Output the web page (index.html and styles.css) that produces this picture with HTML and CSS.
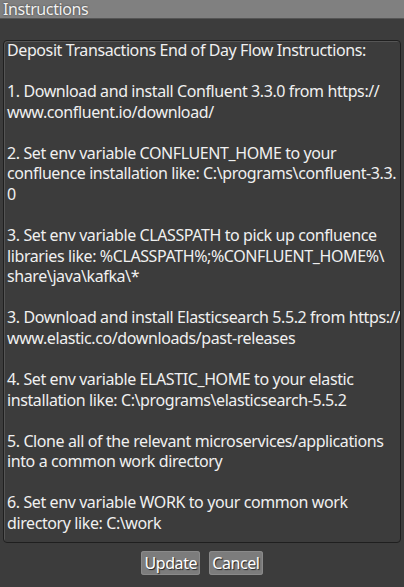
FILE: index.html
```html
<!DOCTYPE html>
<html>
<head>
<meta charset="utf-8">
<link rel="stylesheet" href="styles.css">
</head>
<body>
<div class="titlebar">Instructions</div>
<div class="panel">
<div class="textbox"><div class="text">Deposit Transactions End of Day Flow Instructions:

1. Download and install Confluent 3.3.0 from https://
www.confluent.io/download/

2. Set env variable CONFLUENT_HOME to your
confluence installation like: C:\programs\confluent-3.3.
0

3. Set env variable CLASSPATH to pick up confluence
libraries like: %CLASSPATH%;%CONFLUENT_HOME%\
share\java\kafka\*

3. Download and install Elasticsearch 5.5.2 from https://
www.elastic.co/downloads/past-releases

4. Set env variable ELASTIC_HOME to your elastic
installation like: C:\programs\elasticsearch-5.5.2

5. Clone all of the relevant microservices/applications
into a common work directory

6. Set env variable WORK to your common work
directory like: C:\work</div></div>
<div class="buttons">
<button class="btn">Update</button>
<button class="btn">Cancel</button>
</div>
</div>
</body>
</html>
```
FILE: styles.css
```css
html, body {
  margin: 0;
  padding: 0;
  background: #3c3c3c;
  font-family: "Noto Sans", "Open Sans", sans-serif;
  font-size: 16px;
  letter-spacing: -0.4px;
  color: #ececec;
  height: 100%;
  overflow: hidden;
}
.titlebar {
  height: 18px;
  line-height: 18px;
  background: #808080;
  border-bottom: 1px solid #555555;
  padding-left: 3px;
  color: #f2f2f2;
  text-shadow: 0 0 2px #333;
  white-space: nowrap;
}
.panel {
  padding: 21px 3px 0 3px;
}
.textbox {
  height: 501px;
  border: 1px solid #1f1f1f;
  border-radius: 4px;
  box-shadow: inset 1px 1px 0 #555555;
  overflow: hidden;
}
.text {
  white-space: pre;
  line-height: 20.57px;
  padding: 0 0 0 3px;
  margin-top: -1px;
  color: #f0f0f0;
}
.buttons {
  display: flex;
  justify-content: center;
  gap: 9px;
  margin-top: 8px;
}
.btn {
  height: 24px;
  padding: 0 3px;
  border: none;
  border-radius: 3px;
  background: #7c7c7c;
  box-shadow: inset 0 0 0 1px #8a8a8a;
  color: #ffffff;
  font-family: "Noto Sans", "Open Sans", sans-serif;
  font-size: 16px;
  letter-spacing: -0.4px;
  line-height: 24px;
  text-shadow: 1px 1px 1px #222;
}
```
